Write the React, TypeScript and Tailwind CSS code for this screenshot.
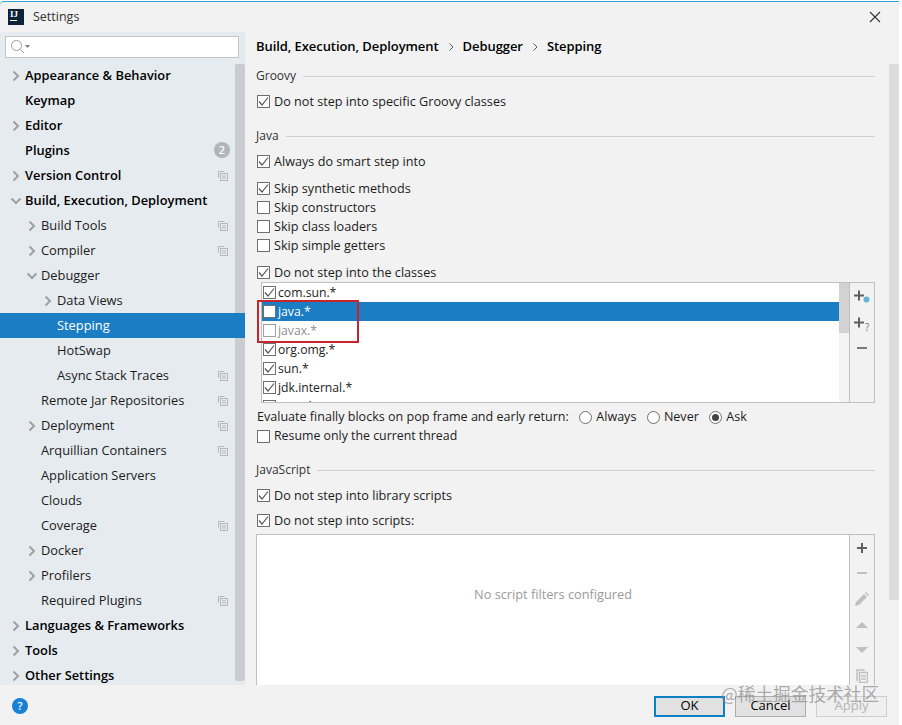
import React from 'react';

const treeRows = [
  { label: 'Appearance & Behavior', level: 0, arrow: 'right', bold: true },
  { label: 'Keymap', level: 0, bold: true },
  { label: 'Editor', level: 0, arrow: 'right', bold: true },
  { label: 'Plugins', level: 0, bold: true, badge: '2' },
  { label: 'Version Control', level: 0, arrow: 'right', bold: true, copy: true },
  { label: 'Build, Execution, Deployment', level: 0, arrow: 'down', bold: true },
  { label: 'Build Tools', level: 1, arrow: 'right', copy: true },
  { label: 'Compiler', level: 1, arrow: 'right', copy: true },
  { label: 'Debugger', level: 1, arrow: 'down' },
  { label: 'Data Views', level: 2, arrow: 'right' },
  { label: 'Stepping', level: 2, selected: true },
  { label: 'HotSwap', level: 2 },
  { label: 'Async Stack Traces', level: 2, copy: true },
  { label: 'Remote Jar Repositories', level: 1, copy: true },
  { label: 'Deployment', level: 1, arrow: 'right', copy: true },
  { label: 'Arquillian Containers', level: 1, copy: true },
  { label: 'Application Servers', level: 1 },
  { label: 'Clouds', level: 1 },
  { label: 'Coverage', level: 1, copy: true },
  { label: 'Docker', level: 1, arrow: 'right' },
  { label: 'Profilers', level: 1, arrow: 'right' },
  { label: 'Required Plugins', level: 1, copy: true },
  { label: 'Languages & Frameworks', level: 0, arrow: 'right', bold: true },
  { label: 'Tools', level: 0, arrow: 'right', bold: true },
  { label: 'Other Settings', level: 0, arrow: 'right', bold: true },
];

const Arrow = ({ dir }: { dir: string }) => (
  <svg width="12" height="12" viewBox="0 0 12 12" fill="none" stroke="#a0a0a0" strokeWidth="2">
    {dir === 'right' ? <path d="M3.5 1.5 8 6l-4.5 4.5" /> : <path d="M1.5 3.5 6 8l4.5-4.5" />}
  </svg>
);

const CopyIcon = () => (
  <svg width="10" height="10" viewBox="0 0 10 10" fill="none" stroke="#b4b8bc" strokeWidth="1">
    <path d="M.5 6.5v-6h6" />
    <rect x="2.5" y="2.5" width="7" height="7" />
    <path d="M4 5h4M4 7h4" />
  </svg>
);

const Check = ({ checked, border = 'border-[#6f6f6f]' }: { checked: boolean; border?: string }) => (
  <span className={`w-[13px] h-[13px] border shrink-0 flex items-center justify-center bg-white ${border}`}>
    {checked && (
      <svg width="11" height="11" viewBox="0 0 11 11" fill="none" stroke="#555" strokeWidth="1.2">
        <path d="M1 5.5 4 9l6-7.5" />
      </svg>
    )}
  </span>
);

const CheckRow = ({ label, checked = true, className = '' }: { label: string; checked?: boolean; className?: string }) => (
  <div className={`h-[19px] flex items-center gap-[4px] ml-[1px] ${className}`}>
    <Check checked={checked} />
    <span>{label}</span>
  </div>
);

const Section = ({ label, className = '' }: { label: string; className?: string }) => (
  <div className={`h-4 flex items-center gap-[7px] text-[12px] text-[#333] ${className}`}>
    <span>{label}</span>
    <div className="flex-1 h-px bg-[#d1d1d1]" />
  </div>
);

const Radio = ({ label, on }: { label: string; on?: boolean }) => (
  <span className="flex items-center gap-[4px]">
    <span className="w-[13px] h-[13px] rounded-full border border-[#6f6f6f] bg-white flex items-center justify-center">
      {on && <span className="w-[7px] h-[7px] rounded-full bg-[#444]" />}
    </span>
    {label}
  </span>
);

const listRows = [
  { label: 'com.sun.*', checked: true },
  { label: 'java.*', checked: false, selected: true },
  { label: 'javax.*', checked: false, dim: true },
  { label: 'org.omg.*', checked: true },
  { label: 'sun.*', checked: true },
  { label: 'jdk.internal.*', checked: true },
  { label: 'junit.*', checked: true },
];

export default function App() {
  return (
    <div className="w-[902px] h-[725px] bg-white pt-px overflow-hidden text-[13px] text-[#1c1c1c] font-['Open_Sans',sans-serif]">
      <div className="w-[899px] h-[724px] flex flex-col bg-[#f2f2f2] border-t border-[#2ba3d4] rounded-tl-[4px] relative">
        <div className="h-[30px] shrink-0 flex items-center pl-2 pr-[18px]">
          <div className="w-[16px] h-[16px] bg-[#0c2238] flex flex-col px-[2px] text-white text-[9px] leading-[10px] font-bold font-['Liberation_Serif',serif]">
            <span>IJ</span>
            <span className="w-[7px] h-px bg-white mt-[1px]" />
          </div>
          <span className="ml-[9px] text-[12.5px] text-[#333] flex-1">Settings</span>
          <svg width="12" height="12" viewBox="0 0 12 12" stroke="#333" strokeWidth="1.1">
            <path d="M1 1l10 10M11 1 1 11" />
          </svg>
        </div>

        <div className="h-[653px] flex shrink-0">
          <aside className="w-[245px] shrink-0 bg-[#e6ebf0] flex flex-col relative text-[12.85px]">
            <div className="h-[31px] shrink-0 pl-[5px] pr-[6px] pt-[4px]">
              <div className="h-[22px] bg-white border border-[#c4c4c4] flex items-center pl-[5px] gap-px">
                <svg width="20" height="14" viewBox="0 0 20 14" fill="none" stroke="#9c9c9c" strokeWidth="1">
                  <circle cx="5.5" cy="5.5" r="5" />
                  <path d="M9.5 9.5 13 13" />
                  <path d="M14 5h5l-2.5 3z" fill="#808080" stroke="none" />
                </svg>
              </div>
            </div>
            <div className="absolute right-0 top-[32px] bottom-[4px] w-[10px] bg-[#c9cdd1] rounded-[2px]" />
            <div className="relative">
              {treeRows.map((row) => (
                <div
                  key={row.label}
                  className={`h-[25px] flex items-center relative ${row.selected ? 'bg-[#1b7dc4] text-white' : ''} ${
                    row.level === 0 ? 'pl-[10px]' : row.level === 1 ? 'pl-[26px]' : 'pl-[42px]'
                  }`}
                >
                  <span className="w-[15px] shrink-0 flex items-center">{row.arrow && <Arrow dir={row.arrow} />}</span>
                  <span className={row.bold ? 'font-semibold text-black' : ''}>{row.label}</span>
                  {row.copy && (
                    <span className="absolute right-[17px] top-[8px] flex">
                      <CopyIcon />
                    </span>
                  )}
                  {row.badge && (
                    <span className="absolute right-[15px] top-[4px] w-4 h-4 rounded-full bg-[#b0b5ba] text-white text-[11px] font-semibold flex items-center justify-center">
                      {row.badge}
                    </span>
                  )}
                </div>
              ))}
            </div>
          </aside>

          <main className="flex-1 pl-[11px] pr-[14px] overflow-hidden text-[12.65px]">
            <div className="mt-[5px] h-5 flex items-center gap-[9px] text-[13px] tracking-[-0.07px] font-semibold text-black">
              <span>Build, Execution, Deployment</span>
              <svg width="6" height="8" viewBox="0 0 6 8" fill="none" stroke="#555" strokeWidth="1">
                <path d="M1.5 .5 5 4 1.5 7.5" />
              </svg>
              <span>Debugger</span>
              <svg width="6" height="8" viewBox="0 0 6 8" fill="none" stroke="#555" strokeWidth="1">
                <path d="M1.5 .5 5 4 1.5 7.5" />
              </svg>
              <span>Stepping</span>
            </div>

            <Section label="Groovy" className="mt-[11px]" />
            <CheckRow label="Do not step into specific Groovy classes" className="mt-[8px]" />

            <Section label="Java" className="mt-[17px]" />
            <CheckRow label="Always do smart step into" className="mt-[8px]" />
            <CheckRow label="Skip synthetic methods" className="mt-[8px]" />
            <CheckRow label="Skip constructors" checked={false} />
            <CheckRow label="Skip class loaders" checked={false} />
            <CheckRow label="Skip simple getters" checked={false} />
            <CheckRow label="Do not step into the classes" className="mt-[8px]" />

            <div className="relative h-[121px] ml-[5px] border border-[#c0c0c0] flex bg-white">
              <div className="flex-1 overflow-hidden text-[12.2px]">
                {listRows.map((row) => (
                  <div
                    key={row.label}
                    className={`h-[19px] flex items-center gap-[2px] pl-px ${row.selected ? 'bg-[#1b7dc4] text-white' : ''} ${
                      row.dim ? 'text-[#8f8f8f]' : ''
                    }`}
                  >
                    <Check checked={row.checked} border={row.dim ? 'border-[#a0a0a0]' : 'border-[#6f6f6f]'} />
                    <span className="pt-px">{row.label}</span>
                  </div>
                ))}
              </div>
              <div className="w-[10px] bg-[#f4f4f4]">
                <div className="h-[50px] bg-[#d2d2d2]" />
              </div>
              <div className="w-[25px] bg-[#f2f2f2] border-l border-[#c0c0c0] flex flex-col items-center pt-[6px] gap-[11px]">
                <svg width="18" height="16" viewBox="0 0 18 16" fill="none">
                  <path d="M1 6.5h10M6 1.5v10" stroke="#5f5f5f" strokeWidth="2" />
                  <circle cx="13.5" cy="10.5" r="3" fill="#62b4d8" />
                </svg>
                <svg width="18" height="17" viewBox="0 0 18 17" fill="none">
                  <path d="M1 6.5h10M6 1.5v10" stroke="#5f5f5f" strokeWidth="2" />
                  <text x="12" y="15" fontSize="10" fill="#777">?</text>
                </svg>
                <svg width="12" height="12" viewBox="0 0 12 12" className="-mt-[2px]">
                  <path d="M1 6h10" stroke="#7a7a7a" strokeWidth="2" />
                </svg>
              </div>
            </div>

            <div className="mt-[5px] h-[19px] flex items-center gap-[10.5px] ml-px text-[12.55px]">
              <span>Evaluate finally blocks on pop frame and early return:</span>
              <Radio label="Always" />
              <Radio label="Never" />
              <Radio label="Ask" on />
            </div>
            <CheckRow label="Resume only the current thread" checked={false} className="text-[12.35px]" />

            <Section label="JavaScript" className="mt-[16px]" />
            <CheckRow label="Do not step into library scripts" className="mt-[8px]" />
            <CheckRow label="Do not step into scripts:" className="mt-[6px]" />

            <div className="mt-[4px] h-[200px] border border-[#c0c0c0] flex bg-white">
              <div className="flex-1 flex justify-center pt-[50px] text-[#9a9a9a] text-[12.75px]">No script filters configured</div>
              <div className="w-[25px] bg-[#f2f2f2] border-l border-[#c0c0c0] flex flex-col items-center pt-[7px] gap-[13px]">
                <svg width="12" height="12" viewBox="0 0 12 12">
                  <path d="M1 6h10M6 1v10" stroke="#5f5f5f" strokeWidth="2" />
                </svg>
                <svg width="12" height="12" viewBox="0 0 12 12">
                  <path d="M1 6h10" stroke="#c0c0c0" strokeWidth="2" />
                </svg>
                <svg width="14" height="14" viewBox="0 0 14 14" fill="#c0c0c0">
                  <path d="M0 14l1-4 8-8 3 3-8 8zM10 1l1-1 3 3-1 1z" />
                </svg>
                <svg width="12" height="12" viewBox="0 0 12 12" fill="#c0c0c0">
                  <path d="M0 9 6 3l6 6z" />
                </svg>
                <svg width="12" height="12" viewBox="0 0 12 12" fill="#c0c0c0">
                  <path d="M0 3l6 6 6-6z" />
                </svg>
                <svg width="12" height="14" viewBox="0 0 12 14" fill="none" stroke="#c0c0c0" strokeWidth="1.5">
                  <path d="M1 12V1h8" />
                  <rect x="3.5" y="3.5" width="8" height="10" />
                  <path d="M5 7h5M5 10h5" />
                </svg>
              </div>
            </div>
          </main>

          <div className="w-[10px] shrink-0 mt-[32px] h-[536px] bg-[#dcdcdc]" />
        </div>

        <footer className="flex-1 flex items-center pl-3 pr-[12px] pt-[2px]">
          <span className="w-4 h-4 rounded-full bg-[#1a80d6] text-white text-[11px] font-semibold flex items-center justify-center">?</span>
          <div className="ml-auto flex gap-[10px] text-[13px] text-black">
            <button className="w-[71px] h-[21px] border-2 border-[#0f7fc6] bg-[#e1e1e1] flex items-center justify-center">OK</button>
            <button className="w-[71px] h-[21px] border border-[#adadad] bg-[#e1e1e1] flex items-center justify-center">Cancel</button>
            <button className="w-[71px] h-[21px] border border-[#cfcfcf] bg-[#efefef] text-[#b5b5b5] flex items-center justify-center">Apply</button>
          </div>
        </footer>

        <div className="absolute left-[721px] top-[679px] text-[17.7px] leading-6 text-[#8a8a8a]/70 font-['Noto_Sans_CJK_SC',sans-serif] whitespace-nowrap">
          @稀土掘金技术社区
        </div>
        <div className="absolute left-[257px] top-[298px] w-[102px] h-[43px] border-2 border-[#c8242b]" />
      </div>
    </div>
  );
}
